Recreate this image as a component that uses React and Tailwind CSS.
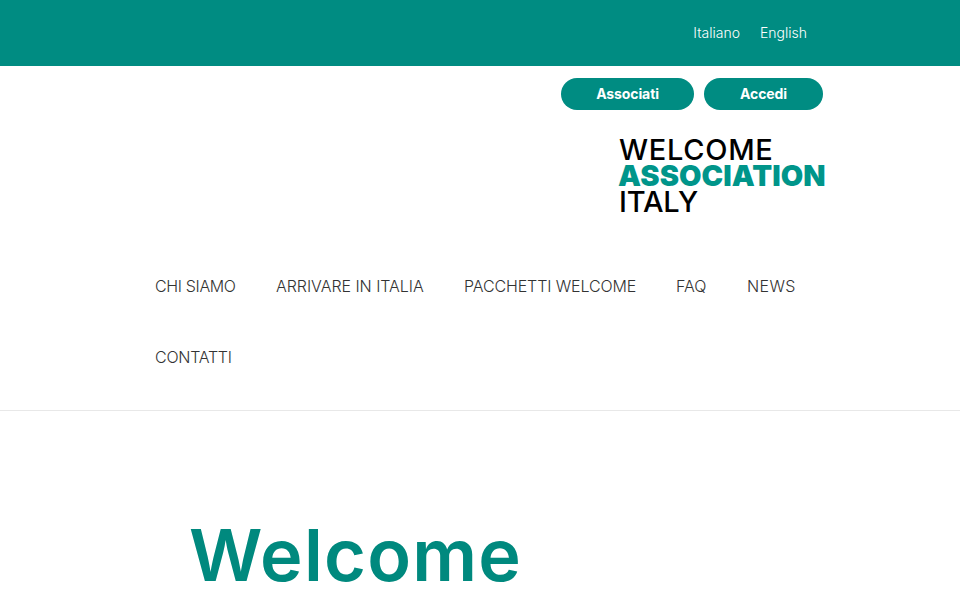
export default function App() {
  const font = { fontFamily: '"Inter", "Liberation Sans", sans-serif' };
  const nav = [
    ["CHI SIAMO", "w-[81px] tracking-[-0.35px]"],
    ["ARRIVARE IN ITALIA", "w-[148px] tracking-[-0.05px]"],
    ["PACCHETTI WELCOME", "w-[172px] tracking-[-0.12px]"],
    ["FAQ", "w-[31px]"],
    ["NEWS", "w-[49px] tracking-[0.4px]"],
    ["CONTATTI", "w-[77px] tracking-[-0.25px]"],
  ];
  return (
    <div className="h-[600px] overflow-hidden bg-white" style={font}>
      <div className="flex h-[66px] items-center justify-end gap-5 bg-[#008c82] pb-[2px] pr-[153px] text-[14px] font-light text-white">
        <a>Italiano</a>
        <a>English</a>
      </div>
      <div className="flex justify-end gap-[10px] pr-[137px] pt-3">
        <a className="flex h-8 w-[133px] items-center justify-center rounded-2xl bg-[#008c82] pb-[1px] text-[14px] font-bold tracking-[-0.1px] text-white">Associati</a>
        <a className="flex h-8 w-[119px] items-center justify-center rounded-2xl bg-[#008c82] pb-[1px] text-[14px] font-bold tracking-[-0.1px] text-white">Accedi</a>
      </div>
      <div className="flex justify-end pr-[135px] pt-[27px]">
        <div className="w-[207px] text-[29px] leading-[26px]">
          <div className="pl-px font-medium tracking-[0.7px] text-black">WELCOME</div>
          <div className="whitespace-nowrap font-black tracking-[0.05px] text-[#00958a]">ASSOCIATION</div>
          <div className="pl-px font-medium tracking-[-0.2px] text-black">ITALY</div>
        </div>
      </div>
      <nav className="flex w-[840px] flex-wrap gap-x-10 pl-[155px] pt-[36px] text-[16px] font-light leading-[71px] text-[#333]">
        {nav.map(([t, w]) => (
          <a key={t} className={`${w} whitespace-nowrap`}>{t}</a>
        ))}
      </nav>
      <div className="mt-[17px] border-t border-[#e8e8e8] pl-[189px] pt-[98px]">
        <h1 className="text-[72px] font-semibold leading-[92px] tracking-[1.25px] text-[#00897e]">Welcome</h1>
      </div>
    </div>
  );
}
